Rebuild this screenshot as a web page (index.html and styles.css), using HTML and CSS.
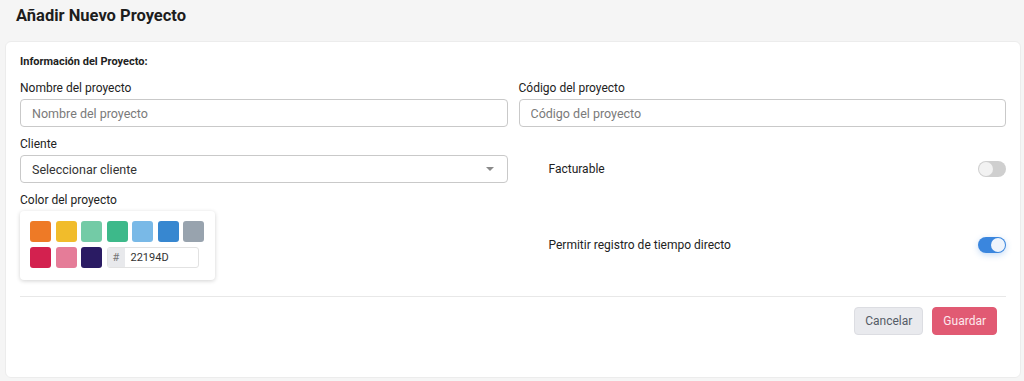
FILE: index.html
```html
<!DOCTYPE html>
<html lang="es">
<head>
    <meta charset="UTF-8">
    <meta name="viewport" content="width=device-width, initial-scale=1.0">
    <title>Añadir Nuevo Proyecto</title>
    <link rel="stylesheet" href="styles.css">
</head>
<body>
    <h1 class="page-title">Añadir Nuevo Proyecto</h1>

    <div class="card">
        <h2 class="section-title">Información del Proyecto:</h2>

        <div class="form-grid">
            <div class="field">
                <label class="field-label">Nombre del proyecto</label>
                <input type="text" class="input-field" placeholder="Nombre del proyecto">
            </div>
            <div class="field">
                <label class="field-label">Código del proyecto</label>
                <input type="text" class="input-field" placeholder="Código del proyecto">
            </div>

            <div class="field">
                <label class="field-label">Cliente</label>
                <div class="select-field">
                    <span>Seleccionar cliente</span>
                    <span class="caret"></span>
                </div>
            </div>
            <div class="toggle-row toggle-row-small">
                <span>Facturable</span>
                <span class="toggle"></span>
            </div>

            <div class="field">
                <label class="field-label">Color del proyecto</label>
                <div class="color-picker">
                    <div class="swatches">
                        <span class="swatch" style="background:#ee7a26"></span>
                        <span class="swatch" style="background:#f1bc2b"></span>
                        <span class="swatch" style="background:#73cba6"></span>
                        <span class="swatch" style="background:#3db98a"></span>
                        <span class="swatch" style="background:#79b9e7"></span>
                        <span class="swatch" style="background:#3787d0"></span>
                        <span class="swatch" style="background:#98a3ae"></span>
                        <span class="swatch" style="background:#d3214f"></span>
                        <span class="swatch" style="background:#e57c98"></span>
                        <span class="swatch" style="background:#2a1b63"></span>
                        <div class="hex-input">
                            <span class="hex-prefix">#</span>
                            <span class="hex-value">22194D</span>
                        </div>
                    </div>
                </div>
            </div>
            <div class="toggle-row toggle-row-tall">
                <span>Permitir registro de tiempo directo</span>
                <span class="toggle on"></span>
            </div>
        </div>

        <hr class="divider">

        <div class="actions">
            <button class="btn btn-cancel">Cancelar</button>
            <button class="btn btn-save">Guardar</button>
        </div>
    </div>
</body>
</html>
```

FILE: styles.css
```css
body {
    margin: 0;
    padding: 0;
    background-color: #f5f5f5;
    font-family: Roboto, "Liberation Sans", Arial, sans-serif;
    color: #222;
}
.page-title {
    margin: 0;
    padding: 6px 16px 0;
    height: 35px;
    font-family: Roboto, "Liberation Sans", sans-serif;
    font-size: 16.5px;
    font-weight: 700;
    line-height: 20px;
    color: #1d1d1d;
}
.card {
    margin: 0 3px 0 5px;
    height: 337px;
    box-sizing: border-box;
    background-color: #fff;
    border: 1px solid #ececec;
    border-radius: 6px;
    padding: 13px 14px 0;
}
.section-title {
    margin: 0 0 12px;
    font-family: Roboto, "Liberation Sans", sans-serif;
    font-size: 11px;
    font-weight: 700;
    line-height: 14px;
    color: #222;
}
.form-grid {
    display: grid;
    grid-template-columns: 1fr 1fr;
    column-gap: 11px;
    row-gap: 10px;
}
.field {
    display: flex;
    flex-direction: column;
}
.field-label {
    font-size: 12px;
    line-height: 14px;
    color: #222;
    margin-bottom: 4px;
}
.input-field,
.select-field {
    height: 28px;
    box-sizing: border-box;
    border: 1px solid #c9c9c9;
    border-radius: 4px;
    padding: 0 11px;
    font-family: inherit;
    font-size: 12.5px;
    color: #333;
    background: #fff;
}
.input-field::placeholder {
    color: #7a7a7a;
}
.select-field {
    display: flex;
    align-items: center;
    justify-content: space-between;
}
.caret {
    width: 0;
    height: 0;
    margin-right: 2px;
    border-left: 4px solid transparent;
    border-right: 4px solid transparent;
    border-top: 4px solid #8a8a8a;
}
.toggle-row {
    display: flex;
    align-items: center;
    justify-content: space-between;
    padding-left: 30px;
    font-size: 12px;
    color: #222;
    align-self: end;
}
.toggle-row-small {
    height: 28px;
}
.toggle-row-tall {
    height: 71px;
    margin-bottom: 0;
}
.toggle {
    position: relative;
    width: 28px;
    height: 16px;
    border-radius: 8px;
    background-color: #cfcfcf;
}
.toggle::after {
    content: "";
    position: absolute;
    top: 1px;
    left: 1px;
    width: 14px;
    height: 14px;
    border-radius: 50%;
    background-color: #f2f2f2;
}
.toggle.on {
    background-color: #3a86de;
    box-shadow: 0 2px 6px rgba(58, 134, 222, 0.3);
}
.toggle.on::after {
    left: 13px;
    background-color: #eef4fc;
}
.color-picker {
    width: 195px;
    box-sizing: border-box;
    padding: 10px 10px 12px;
    border-radius: 4px;
    background: #fff;
    box-shadow: 0 1px 4px rgba(0, 0, 0, 0.18);
}
.swatches {
    display: grid;
    grid-template-columns: repeat(7, 21px);
    gap: 5px 4.5px;
}
.swatch {
    width: 21px;
    height: 21px;
    border-radius: 3px;
}
.hex-input {
    grid-column: span 4;
    display: flex;
    width: 92px;
    height: 21px;
    box-sizing: border-box;
    border: 1px solid #e2e2e2;
    border-radius: 3px;
    overflow: hidden;
    font-size: 11px;
}
.hex-prefix {
    width: 17px;
    background-color: #e8e9ec;
    color: #777;
    display: flex;
    align-items: center;
    justify-content: center;
}
.hex-value {
    padding-left: 6px;
    display: flex;
    align-items: center;
    color: #333;
}
.divider {
    margin: 16px 0 0;
    border: none;
    border-top: 1px solid #e8e8e8;
}
.actions {
    display: flex;
    justify-content: flex-end;
    gap: 9px;
    margin-top: 10px;
    padding-right: 9px;
}
.btn {
    height: 28px;
    padding: 0 10px;
    border-radius: 4px;
    font-family: inherit;
    font-size: 12px;
    cursor: pointer;
}
.btn-cancel {
    background-color: #e9eaee;
    border: 1px solid #dcdde2;
    color: #555c66;
}
.btn-save {
    background-color: #e15a73;
    border: 1px solid #e15a73;
    color: #fde9ee;
}
```
